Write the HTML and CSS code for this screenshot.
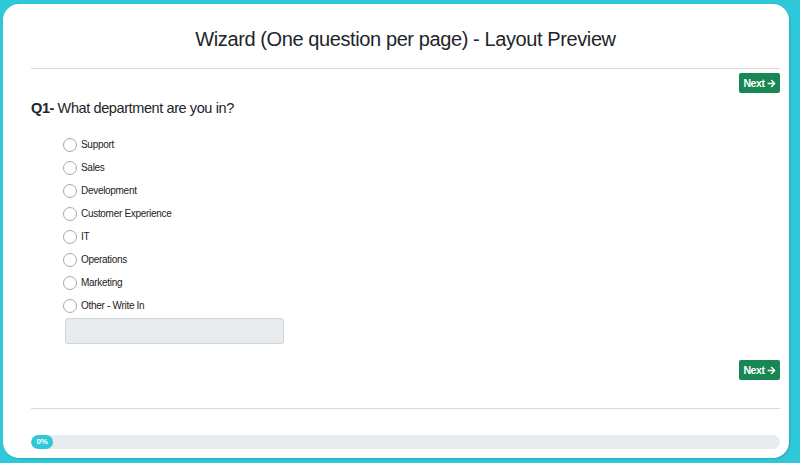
FILE: index.html
```html
<!DOCTYPE html>
<html lang="en">
<head>
  <meta charset="UTF-8">
  <title>Wizard Layout Preview</title>
  <link rel="stylesheet" href="styles.css">
</head>
<body>

  <div class="card">
    <h1>Wizard (One question per page) - Layout Preview</h1>
    <hr>

    <div class="nav-row">
      <button class="next">Next
        <svg viewBox="0 0 448 512" width="9" height="9"><path fill="currentColor" d="M190.5 66.9l22.2-22.2c9.4-9.4 24.6-9.4 33.9 0L441 239c9.4 9.4 9.4 24.6 0 33.9L246.6 467.3c-9.4 9.4-24.6 9.4-33.9 0l-22.2-22.2c-9.5-9.5-9.3-25 .4-34.3L311.4 296H24c-13.3 0-24-10.7-24-24v-32c0-13.3 10.7-24 24-24h287.4L190.9 101.2c-9.8-9.3-10-24.8-.4-34.3z"/></svg>
      </button>
    </div>

    <div class="question">
      <p class="q-title"><b>Q1-</b> What department are you in?</p>

      <div class="options">
        <label class="option"><span class="radio"></span>Support</label>
        <label class="option"><span class="radio"></span>Sales</label>
        <label class="option"><span class="radio"></span>Development</label>
        <label class="option"><span class="radio"></span>Customer Experience</label>
        <label class="option"><span class="radio"></span>IT</label>
        <label class="option"><span class="radio"></span>Operations</label>
        <label class="option"><span class="radio"></span>Marketing</label>
        <label class="option"><span class="radio"></span>Other - Write In</label>
        <div class="write-in"></div>
      </div>
    </div>

    <div class="nav-row bottom">
      <button class="next">Next
        <svg viewBox="0 0 448 512" width="9" height="9"><path fill="currentColor" d="M190.5 66.9l22.2-22.2c9.4-9.4 24.6-9.4 33.9 0L441 239c9.4 9.4 9.4 24.6 0 33.9L246.6 467.3c-9.4 9.4-24.6 9.4-33.9 0l-22.2-22.2c-9.5-9.5-9.3-25 .4-34.3L311.4 296H24c-13.3 0-24-10.7-24-24v-32c0-13.3 10.7-24 24-24h287.4L190.9 101.2c-9.8-9.3-10-24.8-.4-34.3z"/></svg>
      </button>
    </div>

    <hr>

    <div class="progress">
      <div class="progress-fill">0%</div>
    </div>
  </div>

</body>
</html>
```

FILE: styles.css
```css
body {
  font-family: 'Liberation Sans', Arial, sans-serif;
  background-color: #2ec8d8;
  margin: 0;
  padding: 4px 11px 5px 3px;
  color: #212529;
  letter-spacing: -0.4px;
}

.card {
  background-color: white;
  border-radius: 16px;
  height: 454px;
  box-sizing: border-box;
  padding: 0 9px 0 28px;
  box-shadow: 1px 1px 2px rgba(0,0,0,0.15);
  overflow: hidden;
}

h1 {
  font-size: 20px;
  font-weight: normal;
  text-align: center;
  margin: 0;
  padding-top: 23px;
  height: 41px;
  line-height: 24px;
}

hr {
  border: none;
  border-top: 1px solid #d9d9d9;
  margin: 0;
}

.nav-row {
  display: flex;
  justify-content: flex-end;
  padding-top: 4px;
}

.nav-row.bottom {
  padding-top: 16px;
  height: 48px;
}

.next {
  background-color: #198754;
  color: white;
  border: none;
  border-radius: 2px;
  font-family: 'Liberation Sans', Arial, sans-serif;
  font-size: 10.5px;
  font-weight: bold;
  height: 20px;
  width: 41px;
  padding: 0;
  display: flex;
  align-items: center;
  justify-content: center;
  gap: 2px;
  letter-spacing: -0.4px;
}

.q-title {
  font-size: 14.5px;
  margin: 6px 0 0;
  line-height: 18px;
}

.options {
  display: flex;
  flex-direction: column;
  padding-left: 32px;
  padding-top: 16px;
}

.option {
  display: flex;
  align-items: center;
  height: 23px;
  font-size: 10px;
  color: #222;
  letter-spacing: -0.3px;
}

.radio {
  width: 12px;
  height: 12px;
  border: 1px solid #a8a8a8;
  border-radius: 50%;
  margin-right: 4px;
  flex: none;
}

.write-in {
  width: 217px;
  height: 24px;
  margin: 1px 0 0 2px;
  background-color: #e9ecef;
  border: 1px solid #ced4da;
  border-radius: 3px;
}

.progress {
  margin-top: 26px;
  height: 14px;
  border-radius: 7px;
  background-color: #e9ecef;
  overflow: hidden;
}

.progress-fill {
  width: 22px;
  height: 14px;
  border-radius: 7px;
  background-color: #2ec8d8;
  color: white;
  font-size: 8px;
  font-weight: bold;
  text-align: center;
  line-height: 14px;
}
```
